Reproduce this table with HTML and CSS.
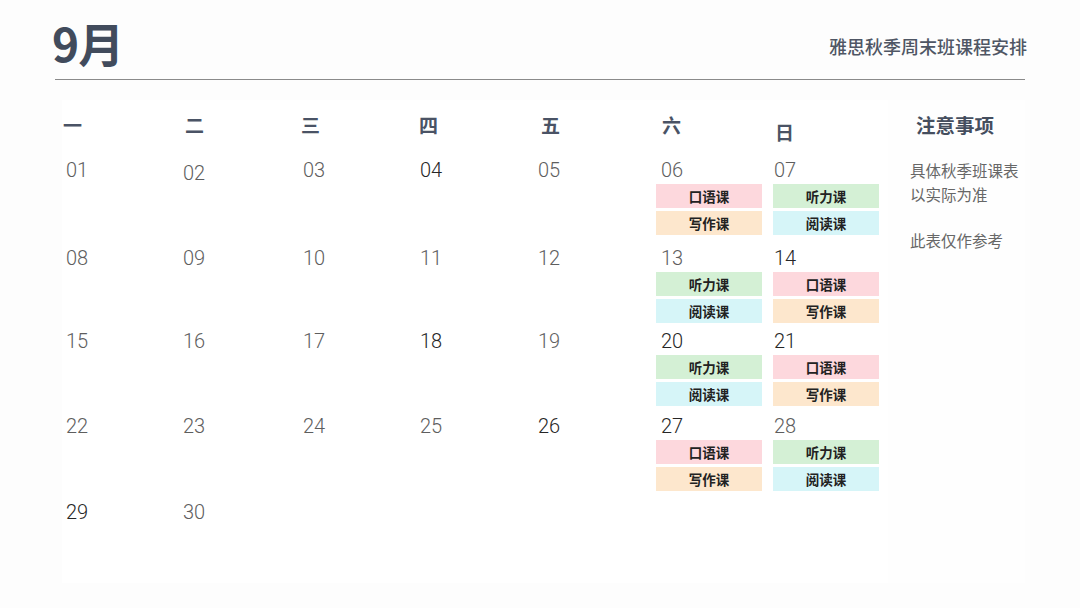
FILE: index.html
```html
<!DOCTYPE html>
<html lang="zh">
<head>
<meta charset="utf-8">
<title>9月 雅思秋季周末班课程安排</title>
<link rel="stylesheet" href="styles.css">
</head>
<body>
<header class="header">
  <h1 class="title">9月</h1>
  <div class="subtitle">雅思秋季周末班课程安排</div>
</header>
<main class="main">
  <section class="calendar">
    <div class="wd c1">一</div>
    <div class="wd c2">二</div>
    <div class="wd c3">三</div>
    <div class="wd c4">四</div>
    <div class="wd c5">五</div>
    <div class="wd c6">六</div>
    <div class="wd c7 sun">日</div>

    <div class="day c1"><span class="num">01</span></div>
    <div class="day c2"><span class="num low">02</span></div>
    <div class="day c3"><span class="num">03</span></div>
    <div class="day c4"><span class="num dark">04</span></div>
    <div class="day c5"><span class="num">05</span></div>
    <div class="day c6"><span class="num">06</span><div class="pill pink">口语课</div><div class="pill orange">写作课</div></div>
    <div class="day c7"><span class="num">07</span><div class="pill green">听力课</div><div class="pill cyan">阅读课</div></div>

    <div class="day c1"><span class="num">08</span></div>
    <div class="day c2"><span class="num">09</span></div>
    <div class="day c3"><span class="num">10</span></div>
    <div class="day c4"><span class="num">11</span></div>
    <div class="day c5"><span class="num">12</span></div>
    <div class="day c6"><span class="num">13</span><div class="pill green">听力课</div><div class="pill cyan">阅读课</div></div>
    <div class="day c7"><span class="num dark">14</span><div class="pill pink">口语课</div><div class="pill orange">写作课</div></div>

    <div class="day c1"><span class="num">15</span></div>
    <div class="day c2"><span class="num">16</span></div>
    <div class="day c3"><span class="num">17</span></div>
    <div class="day c4"><span class="num dark">18</span></div>
    <div class="day c5"><span class="num">19</span></div>
    <div class="day c6"><span class="num dark">20</span><div class="pill green">听力课</div><div class="pill cyan">阅读课</div></div>
    <div class="day c7"><span class="num dark">21</span><div class="pill pink">口语课</div><div class="pill orange">写作课</div></div>

    <div class="day c1"><span class="num">22</span></div>
    <div class="day c2"><span class="num">23</span></div>
    <div class="day c3"><span class="num">24</span></div>
    <div class="day c4"><span class="num">25</span></div>
    <div class="day c5"><span class="num dark">26</span></div>
    <div class="day c6"><span class="num dark">27</span><div class="pill pink">口语课</div><div class="pill orange">写作课</div></div>
    <div class="day c7"><span class="num">28</span><div class="pill green">听力课</div><div class="pill cyan">阅读课</div></div>

    <div class="day c1"><span class="num dark">29</span></div>
    <div class="day c2"><span class="num">30</span></div>
  </section>
  <aside class="notes">
    <h2 class="notes-title">注意事项</h2>
    <p class="note">具体秋季班课表<br>以实际为准</p>
    <p class="note">此表仅作参考</p>
  </aside>
</main>
</body>
</html>
```
FILE: styles.css
```css
* { box-sizing: border-box; }

body {
  margin: 0;
  width: 1080px;
  height: 608px;
  overflow: hidden;
  background: #fdfdfd;
  font-family: "Noto Sans CJK SC", "Noto Sans", sans-serif;
  color: #333;
}

.header {
  margin: 0 55px;
  height: 80px;
  border-bottom: 1px solid #8a8a8a;
  display: flex;
  justify-content: space-between;
  align-items: flex-start;
}

.title {
  margin: 16px 0 0 -3px;
  font-size: 46px;
  line-height: 52px;
  font-weight: 700;
  color: #414b5c;
  letter-spacing: -1px;
}

.subtitle {
  margin: 34px -2px 0 0;
  font-size: 18px;
  line-height: 24px;
  font-weight: 500;
  color: #4f5664;
}

.main {
  display: flex;
  margin: 20px 0 0 62px;
}

.calendar {
  width: 826px;
  height: 483px;
  background: #ffffff;
  display: grid;
  grid-template-columns: repeat(7, 118px);
  grid-template-rows: 59px 88px 83px 85px 86px 1fr;
  align-content: start;
}

.wd {
  padding-top: 12px;
  font-size: 19px;
  line-height: 26px;
  font-weight: 700;
  color: #4a5365;
}
.wd.c1 { padding-left: 1px; }
.wd.c2 { padding-left: 5px; }
.wd.c3 { padding-left: 3px; }
.wd.c4 { padding-left: 3px; }
.wd.c5 { padding-left: 7px; }
.wd.c6 { padding-left: 10px; }
.wd.c7 { padding-left: 5px; }
.wd.sun { padding-top: 19px; }

.day {
  display: flex;
  flex-direction: column;
  align-items: flex-start;
}
.day.c1 .num { padding-left: 4px; }
.day.c2 .num { padding-left: 3px; }
.day.c3 .num { padding-left: 5px; }
.day.c4 .num { padding-left: 4px; }
.day.c5 .num { padding-left: 4px; }
.day.c6 .num { padding-left: 9px; }
.day.c7 .num { padding-left: 4px; }
.day.c6 .pill { margin-left: 4px; }
.day.c7 .pill { margin-left: 3px; }

.num {
  font-family: "Roboto", "Liberation Sans", sans-serif;
  font-weight: 300;
  font-size: 20px;
  line-height: 22px;
  color: #5e5e5e;
}
.num.dark { color: #262626; }
.num.low { margin-top: 3px; }

.pill {
  width: 106px;
  height: 24px;
  line-height: 24px;
  margin-top: 3px;
  text-align: center;
  font-size: 13.5px;
  font-weight: 700;
  color: #222;
}

.pink { background: #fdd8dd; }
.orange { background: #fde7cd; }
.green { background: #d4f0d5; }
.cyan { background: #d6f5f8; }

.notes {
  width: 137px;
  height: 483px;
  background: #fefefe;
}

.notes-title {
  margin: 12px 0 0 28px;
  font-size: 19.5px;
  line-height: 26px;
  font-weight: 700;
  color: #454e5e;
}

.note {
  margin: 21px 0 0 22px;
  font-size: 15.5px;
  line-height: 23.5px;
  color: #676767;
  white-space: nowrap;
}
.note + .note { margin-top: 23px; }
```
